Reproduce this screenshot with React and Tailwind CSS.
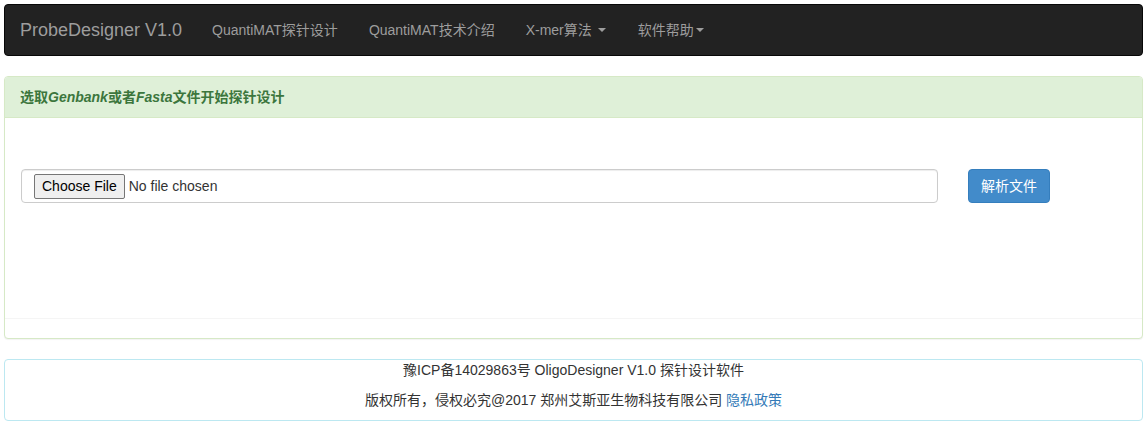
import React from "react";

const font = { fontFamily: '"Liberation Sans", Arial, "Noto Sans CJK SC", sans-serif' };

const Caret = () => (
  <span className="ml-[2px] inline-block h-0 w-0 border-x-[4px] border-t-[4px] border-x-transparent border-t-[#9d9d9d] align-middle" />
);

const App = () => {
  return (
    <div className="min-h-screen bg-white p-[4px] text-[14px] text-[#333]" style={font}>
      {/* Navbar */}
      <nav className="flex h-[52px] items-stretch rounded-[4px] border border-[#080808] bg-[#222]">
        <a className="flex items-center px-[15px] text-[18px] text-[#9d9d9d]">ProbeDesigner V1.0</a>
        <ul className="flex items-stretch">
          <li className="flex items-center px-[15px] text-[#9d9d9d]">QuantiMAT探针设计</li>
          <li className="flex items-center pl-[16px] pr-[15px] text-[#9d9d9d]">QuantiMAT技术介绍</li>
          <li className="flex items-center pl-[16px] pr-[15px] text-[#9d9d9d]">
            X-mer算法&nbsp;<Caret />
          </li>
          <li className="flex items-center pl-[17px] pr-[15px] text-[#9d9d9d]">
            软件帮助<Caret />
          </li>
        </ul>
      </nav>

      {/* Upload panel */}
      <div className="mt-[20px] rounded-[4px] border border-[#d6e9c6] bg-white shadow-[0_1px_1px_rgba(0,0,0,0.05)]">
        <div className="rounded-t-[3px] border-b border-[#d6e9c6] bg-[#dff0d8] px-[15px] py-[10px] font-bold leading-[20px] text-[#3c763d]">
          选取<i>Genbank</i>或者<i>Fasta</i>文件开始探针设计
        </div>
        <div className="h-[200px] px-[16px] pt-[51px]">
          <div className="flex items-start">
            <div className="flex h-[34px] w-[917px] items-center rounded-[4px] border border-[#ccc] px-[12px] shadow-[inset_0_1px_1px_rgba(0,0,0,0.075)]">
              <input type="file" className="text-[14px] text-[#333] file:mr-[4px] file:rounded-[2px] file:border file:border-[#767676] file:bg-[#efefef] file:px-[7px] file:py-[1px] file:text-[14px] file:text-black" style={font} />
            </div>
            <button className="ml-[30px] h-[34px] rounded-[4px] border border-[#357ebd] bg-[#428bca] px-[12px] text-[14px] text-white">
              解析文件
            </button>
          </div>
        </div>
        <div className="h-[20px] border-t border-[#f5f5f5]" />
      </div>

      {/* Footer */}
      <div className="mt-[20px] rounded-[4px] border border-[#bce8f1] bg-white text-center leading-[20px]">
        <p className="mb-[10px]">豫ICP备14029863号 OligoDesigner V1.0 探针设计软件</p>
        <p className="mb-[10px]">
          版权所有，侵权必究@2017 郑州艾斯亚生物科技有限公司 <a className="text-[#337ab7]">隐私政策</a>
        </p>
      </div>
    </div>
  );
};

export default App;
